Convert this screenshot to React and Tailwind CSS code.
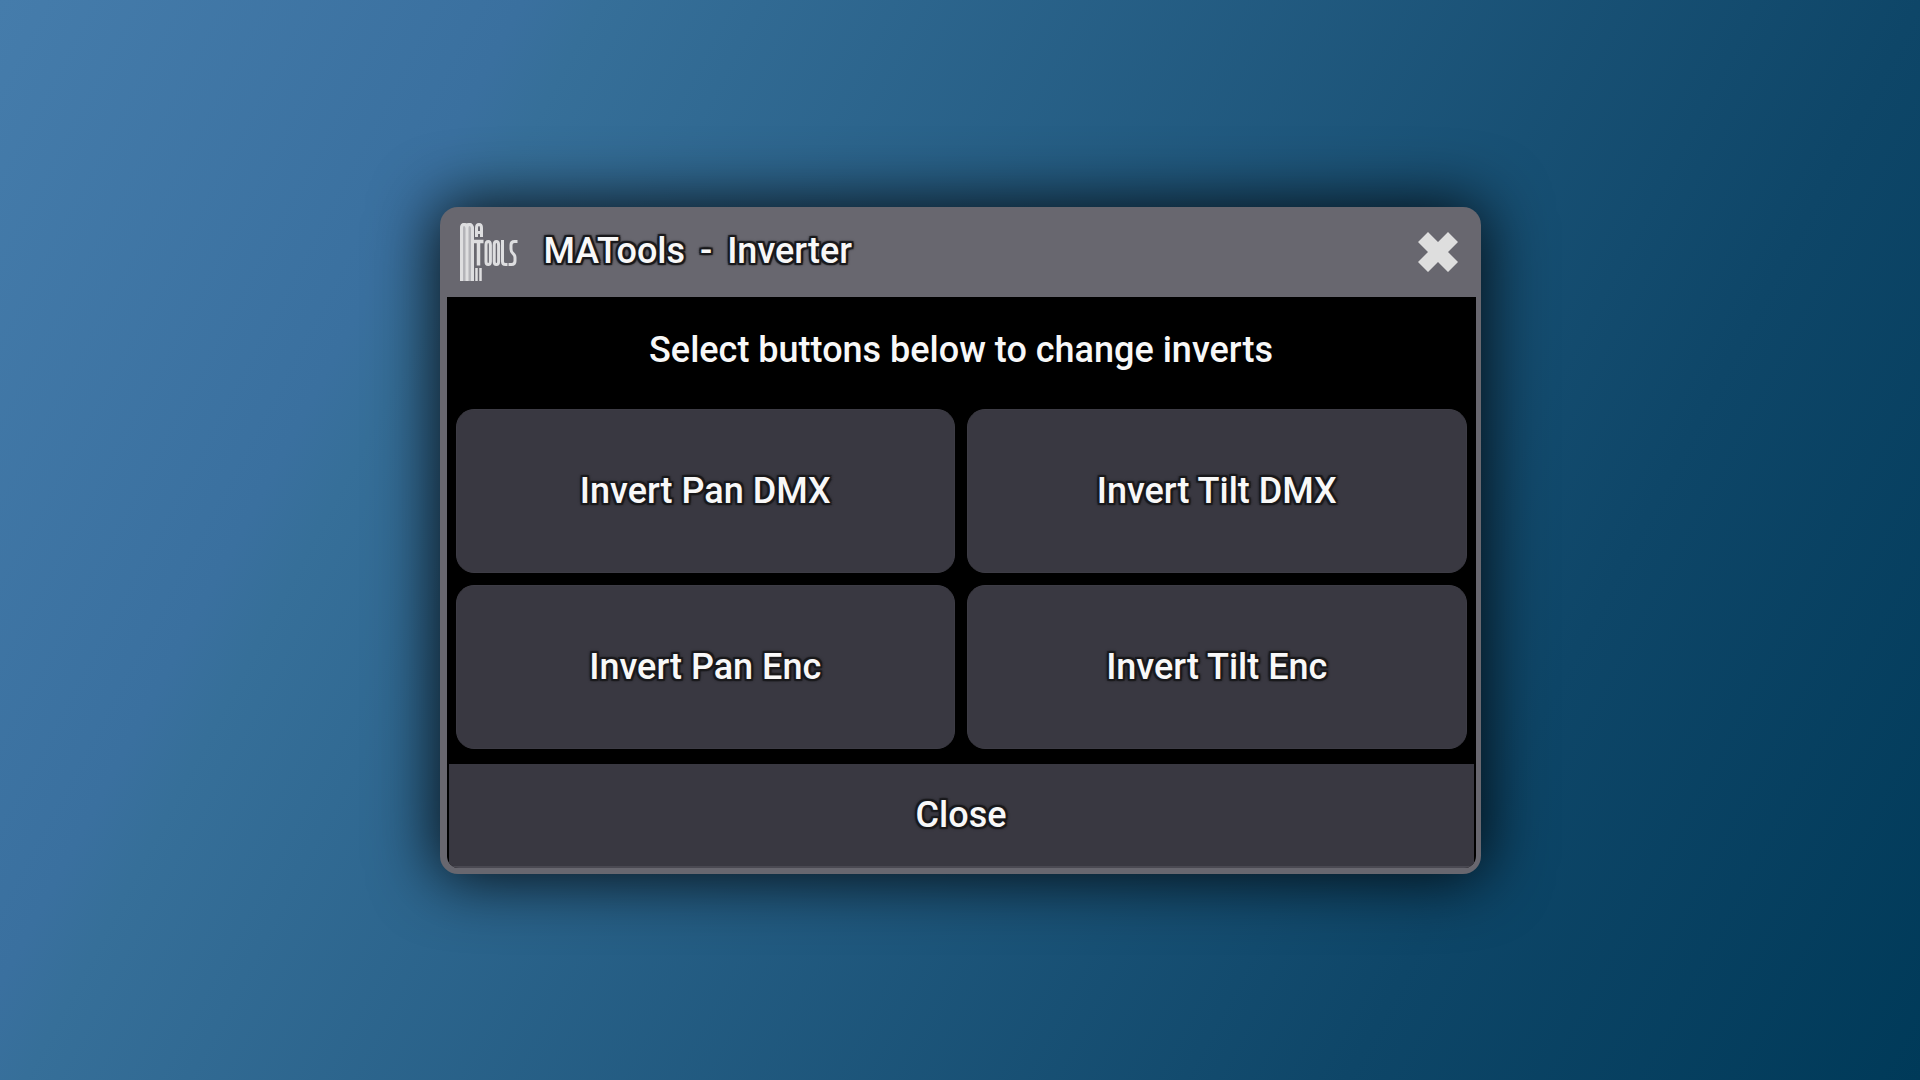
import React from "react";

const inverts = ["Invert Pan DMX", "Invert Tilt DMX", "Invert Pan Enc", "Invert Tilt Enc"];

const outline =
  "[text-shadow:2px_0_1px_#1a1a1d,-2px_0_1px_#1a1a1d,0_2px_1px_#1a1a1d,0_-2px_1px_#1a1a1d,2px_2px_1px_#1a1a1d,-2px_2px_1px_#1a1a1d,2px_-2px_1px_#1a1a1d,-2px_-2px_1px_#1a1a1d,0_0_4px_#1a1a1d]";

const Logo = () => (
  <svg viewBox="0 0 58 58" className="size-[58px]" fill="none" aria-label="MATools" role="img">
    <path d="M0 58V4l3-4h8l3 4v54z" fill="#b4b4b9" />
    <g stroke="#dedee0" strokeWidth="3">
      <path d="M1.500 58V5q0-3.500 2.500-3.500T7 5v53M7 5q0-3.500 2.500-3.500T12.500 5v53" />
      <path d="M16.500 14V5q0-3.500 2.500-3.500T21.500 5v9M16.500 9.500h5" />
      <path d="M14 18.500h9.500M18.500 18v24.500" strokeWidth="3.500" />
      <path d="M16.500 45v13M20.500 45v13" strokeWidth="2.500" />
      <path d="M26 22q0-3.500 2.200-3.500t2.200 3.500v16.500q0 3-2.200 3t-2.200-3zM34.200 22q0-3.500 2.200-3.500t2.200 3.500v16.500q0 3-2.200 3t-2.200-3z" />
      <path d="M42.500 17v21.500q0 3 3 3h2M57.500 18.500h-3q-3.500 0-3.500 3.500v4q0 3 2 4.500t2 4v3.500q0 3.500-3.500 3.500h-3" />
    </g>
  </svg>
);

const CloseIcon = () => (
  <svg viewBox="0 0 42 42" className="size-[42px]" aria-hidden="true">
    <path
      fill="#dedede"
      d="M11 1 21 11 31 1 41 11 31 21 41 31 31 41 21 31 11 41 1 31 11 21 1 11Z"
    />
  </svg>
);

const App = () => {
  return (
    <div className="min-h-screen flex items-center justify-center bg-[linear-gradient(118deg,#457cab_0%,#3a709f_21%,#366f99_24%,#0e4668_77%,#003a59_100%)] font-['Roboto',sans-serif] text-4xl font-medium text-[#f8f8f8]">
      <main className="w-full max-w-[1041px] rounded-[18px] bg-[#68676f] pl-[7px] pr-[5px] pb-[6px] shadow-[0_0_64px_4px_rgba(0,0,0,0.85)]">
        {/* Title bar */}
        <header className="flex h-[90px] items-center pl-[13px] pr-[17px]">
          <Logo />
          <h1 className={`ml-[26px] flex-1 pb-0.5 ${outline}`}>
            MATools <span className="mx-1.5">-</span> Inverter
          </h1>
          <button type="button" aria-label="Close window">
            <CloseIcon />
          </button>
        </header>

        {/* Dialog body */}
        <section className="overflow-hidden rounded-b-xl bg-black">
          <p className="flex h-28 items-center justify-center pb-1.5">
            Select buttons below to change inverts
          </p>
          <div className="grid grid-cols-2 gap-3 px-[9px] pb-[15px]">
            {inverts.map((label) => (
              <button
                key={label}
                type="button"
                className={`h-[164px] rounded-[18px] border border-[#3d3c45] bg-[#393841] ${outline}`}
              >
                {label}
              </button>
            ))}
          </div>
          <div className="px-0.5">
            <button
              type="button"
              className={`h-[104px] w-full border-b-2 border-[#4a4952] bg-[#393841] ${outline}`}
            >
              Close
            </button>
          </div>
        </section>
      </main>
    </div>
  );
};

export default App;
